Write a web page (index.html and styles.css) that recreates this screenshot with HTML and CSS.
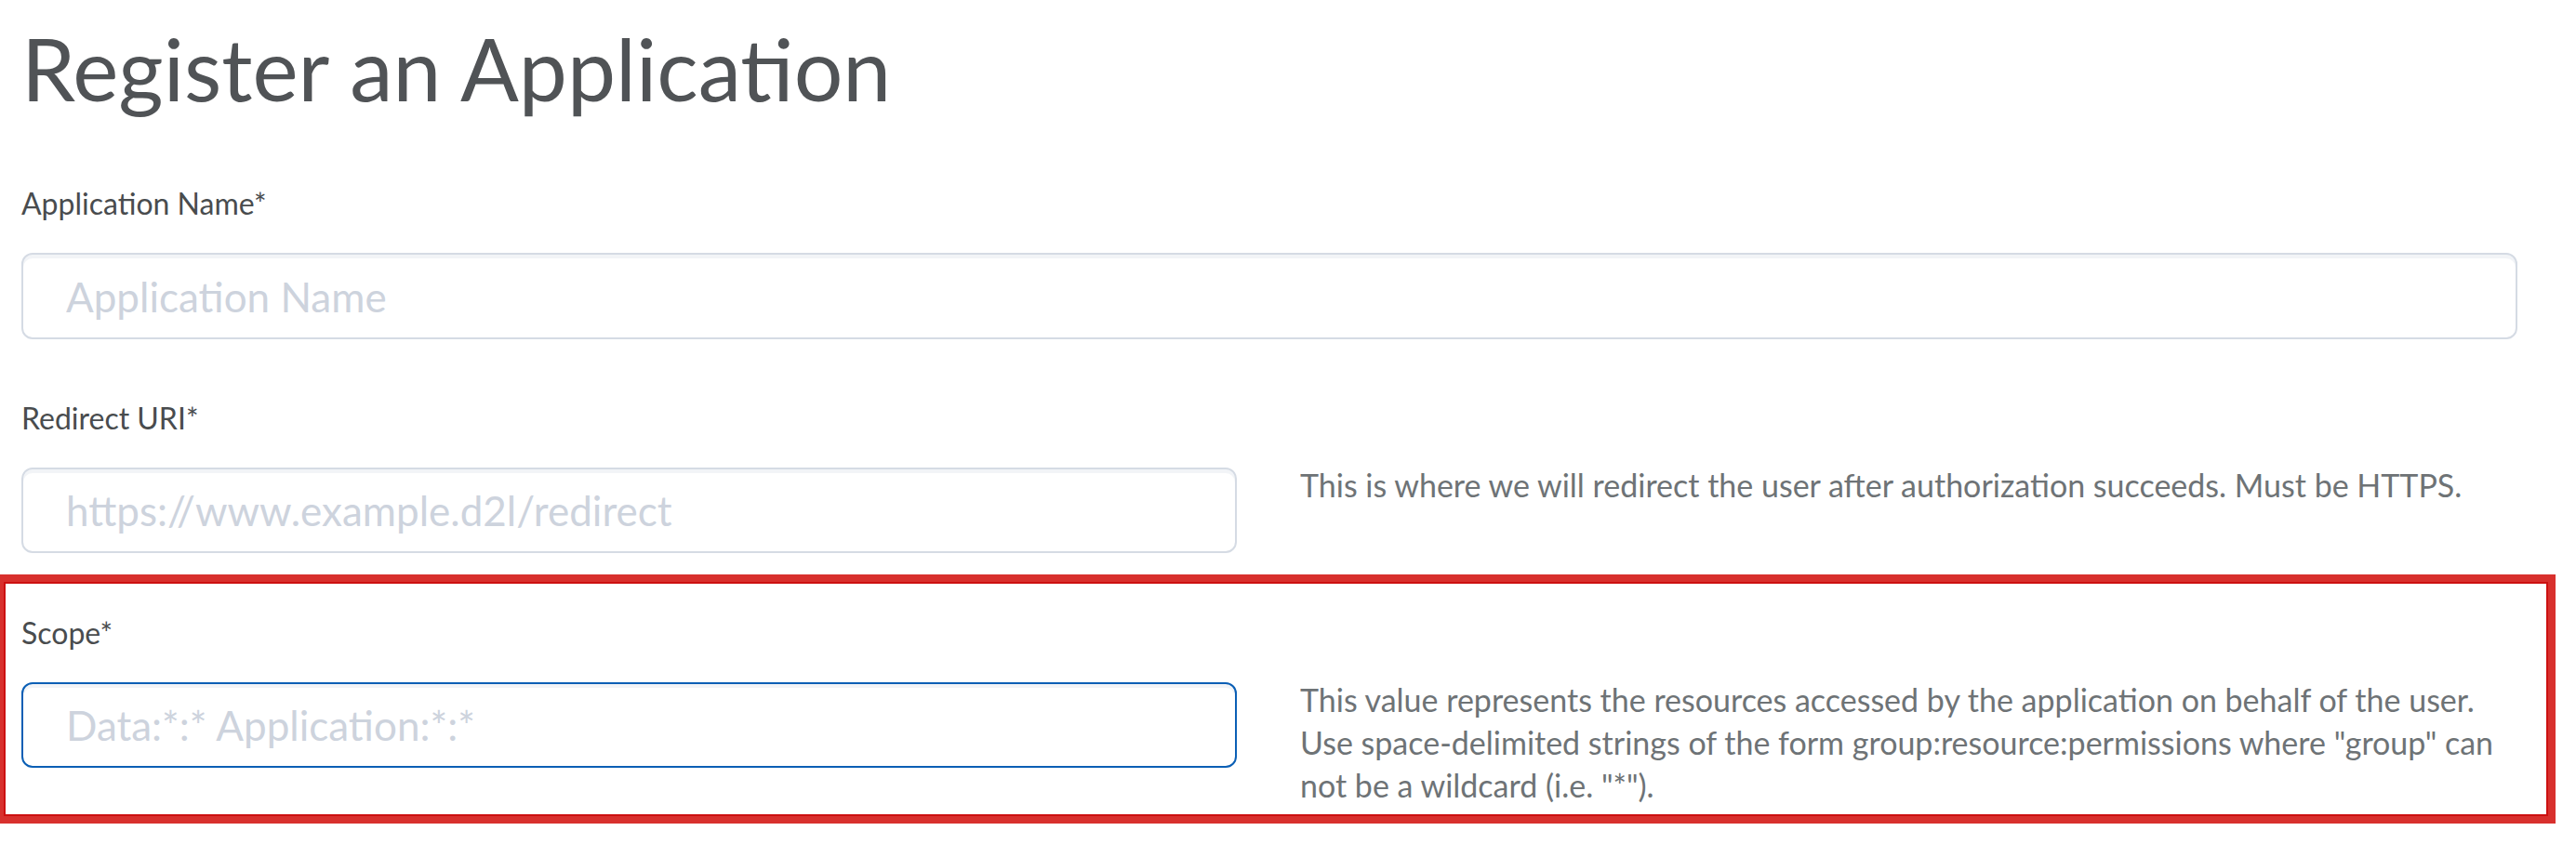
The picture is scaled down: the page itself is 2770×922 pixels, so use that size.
FILE: index.html
```html
<!DOCTYPE html>
<html lang="en">
<head>
  <meta charset="UTF-8">
  <meta name="viewport" content="width=device-width, initial-scale=1.0">
  <title>Register an Application</title>
  <link rel="stylesheet" href="styles.css">
</head>
<body>
  <h1 class="page-title">Register an Application</h1>
  <form id="register-form">
    <div class="field">
      <label class="field-label" for="app-name">Application Name*</label>
      <input class="field-input field-input-full" type="text" id="app-name" name="name" placeholder="Application Name">
    </div>

    <div class="field">
      <label class="field-label" for="redirect-uri">Redirect URI*</label>
      <div class="field-row">
        <input class="field-input" type="url" id="redirect-uri" name="redirect" placeholder="https://www.example.d2l/redirect">
        <p class="field-help">This is where we will redirect the user after authorization succeeds. Must be HTTPS.</p>
      </div>
    </div>

    <!-- champ mis en évidence -->
    <div class="field field-highlight">
      <label class="field-label" for="scope">Scope*</label>
      <div class="field-row">
        <input class="field-input field-input-focus" type="text" id="scope" name="scope" placeholder="Data:*:* Application:*:*">
        <p class="field-help">This value represents the resources accessed by the application on behalf of the user.<br>Use space-delimited strings of the form group:resource:permissions where "group" can not be a wildcard (i.e. "*").</p>
      </div>
    </div>
  </form>
</body>
</html>
```

FILE: styles.css
```css
body {
  margin: 0;
  padding: 0 63px 0 23px;
  background-color: #fff;
  font-family: Lato, "Open Sans", sans-serif;
  color: #494c4e;
}

.page-title {
  margin: 17px 0 71px;
  font-size: 93px;
  line-height: 112px;
  font-weight: 400;
  color: #505356;
}

.field {
  margin-bottom: 66px;
}

.field-label {
  display: block;
  margin-bottom: 34px;
  font-size: 32px;
  line-height: 38px;
  color: #494c4e;
}

.field-row {
  display: grid;
  grid-template-columns: 1307px 1fr;
  column-gap: 68px;
  align-items: start;
}

.field-input {
  display: block;
  box-sizing: border-box;
  width: 1307px;
  height: 92px;
  padding: 0 46px;
  border: 2px solid #d5dbe4;
  border-radius: 12px;
  box-shadow: inset 0 4px 0 0 rgba(185, 194, 208, 0.18);
  font-family: Lato, "Open Sans", sans-serif;
  font-size: 44px;
  color: #494c4e;
  background-color: #fff;
  outline: none;
}

.field-input-full {
  width: 100%;
  height: 93px;
}

.field-input::placeholder {
  color: #cdd3dd;
}

.field-input-focus {
  border-color: #0b5fb5;
}

.field-help {
  margin: -4px 0 0;
  font-size: 34px;
  line-height: 46px;
  color: #6e7376;
}

/* Encadré rouge autour du champ Scope */
.field-highlight {
  margin: -43px -41px 0 -23px;
  padding: 36px 33px 10px 19px;
  border: 8px solid #d8302d;
  border-left-width: 4px;
  box-shadow: inset 0 0 0 2px #cc1010;
}
```
